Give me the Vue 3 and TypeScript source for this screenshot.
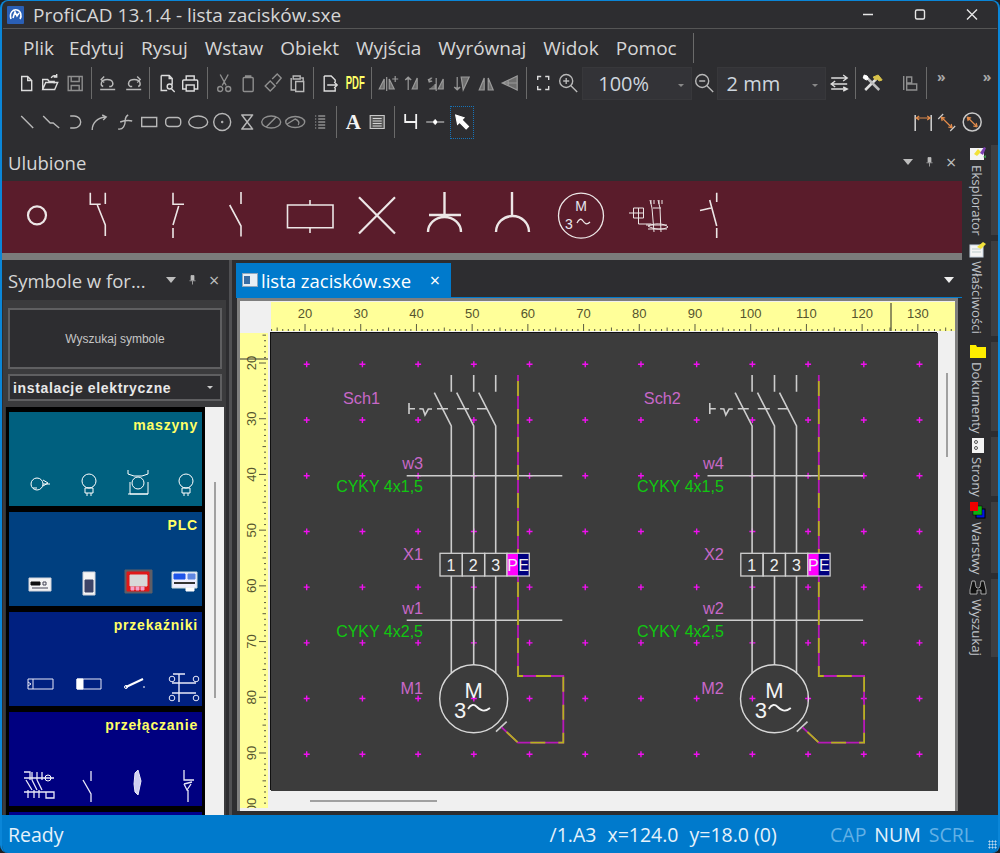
<script setup lang="ts">
type Part = { d: string; s?: string; f?: string; w?: number }
type Tool = { sep?: boolean; d?: string; tone?: string; parts?: Part[]; pdf?: boolean; big?: string; active?: boolean }

// kółko jako sciezka
const c = (x: number, y: number, r: number, ry = r) =>
  `M${x - r} ${y}a${r} ${ry} 0 1 0 ${2 * r} 0a${r} ${ry} 0 1 0 ${-2 * r} 0`

const menu = ['Plik', 'Edytuj', 'Rysuj', 'Wstaw', 'Obiekt', 'Wyjścia', 'Wyrównaj', 'Widok', 'Pomoc']

const row1a: Tool[] = [
  { d: 'M7.5 5.5h6l4 4v10h-10zM13.5 5.5v4h4' },
  { d: 'M4.5 18.5v-10h5l1.5 2h5v2M4.5 18.5l3-7h12l-3 7zM13 7c1-2 3-3 5-2M18.5 3v3h-3' },
  { d: 'M5 5.5h14v14H5zM8 5.5v5h8v-5M8 19.5v-5h8v5', tone: 'dim' },
  { sep: true },
  { d: 'M7 15.5c-3-1-3-7 4-7 6 0 7 5 4 7h-2M4 18.5h15M8 5.5l-3 3 3 3', tone: 'mid' },
  { d: 'M17 15.5c3-1 3-7-4-7-6 0-7 5-4 7h2M5 18.5h15M16 5.5l3 3-3 3', tone: 'mid' },
  { sep: true },
  { d: 'M7 4.5h8l3 3v6M7 4.5v15h6M15 4.5v3h3M13 15.5a2.5 2.5 0 1 0 5 0a2.5 2.5 0 1 0-5 0M17.5 18l3 3' },
  { d: 'M8 9V5h8v4M8 18H4.5v-8q0-1 1-1h13q1 0 1 1v8H16M8 14h8v6H8z' },
  { sep: true },
  { d: `M8 3.5l6 11M16 3.5l-6 11${c(8, 18, 2.5)}${c(16, 18, 2.5)}`, tone: 'dim' },
  { d: 'M8 6.5h8q1 0 1 1v12q0 1-1 1H8q-1 0-1-1v-12q0-1 1-1zM9.5 6.5V5h5v1.5', tone: 'dim' },
  { d: 'M4 15l5-5 5 5-5 5zM11 8l5-5 4 4-5 6', tone: 'dim' },
  { d: 'M8 5h7v3H8zM6 7v12h4M16 7h2v3M10.5 10.5h8v10h-8z', tone: 'mid' },
  { sep: true },
  { d: 'M6 5h7l4 4v2M6 5v15h11v-3M9 14h10M16 11l3 3-3 3' },
  { pdf: true },
  { sep: true },
  { d: 'M3 18l5-10v10zM13 8l5 10h-5zM10.5 6v14M19 5v6M16 8h6', tone: 'solid' },
  { d: 'M8 19V6M5 9l3-3 3 3M12 18l5-11v11z', tone: 'solid' },
  { d: 'M13 18l5-10v10zM11 7v13M4 18h6v-5M7 7a3 3 0 0 0-3 4M3 8l1 3 3-1', tone: 'solid' },
  { d: 'M8 6v13M5 16l3 3 3-3M12 6h8l-6 13z', tone: 'solid' },
  { d: 'M5 19l5-12v12zM14 7l5 12h-5z', tone: 'solid' },
  { d: 'M4 12l15-7v14zM4 12h15M10 9v6', tone: 'solid' },
  { sep: true },
  { d: 'M6.5 9V5.5H10M14 5.5h3.5V9M17.5 15v3.5H14M10 18.5H6.5V15' },
  { d: `${c(10, 10, 6.5)}M7 10h6M10 7v6M15 15l6 6`, tone: 'mid' },
]

const row2a: Tool[] = [
  { d: 'M6 6l12 12', tone: 'mid' },
  { d: 'M4 6l7 7h3l6 5', tone: 'mid' },
  { d: 'M6 6h4a6.5 6 0 1 1 0 12H6', tone: 'mid' },
  { d: 'M4 20c0-7 5-12 13-13M14 5l4 2-3 3', tone: 'mid' },
  { d: 'M5 19c5 1 7-4 7-8 0-3 1-5 3-6M7 12c3-1 8-2 12-1', tone: 'mid' },
  { d: 'M4.5 7.5h15v9h-15z', tone: 'mid' },
  { d: 'M8 7.5h8a3.5 3.5 0 0 1 3.5 3.5v2a3.5 3.5 0 0 1-3.5 3.5H8A3.5 3.5 0 0 1 4.5 13v-2A3.5 3.5 0 0 1 8 7.5z', tone: 'mid' },
  { d: c(12, 12, 9.5, 6), tone: 'mid' },
  { d: `${c(12, 12, 8.5)}${c(12, 12, 0.5)}`, tone: 'mid' },
  { d: 'M6 5h12M6 19h12M7 5.5l10 13M17 5.5L7 18.5', tone: 'mid' },
  { d: `${c(12, 12, 9.5, 6)}M7 17l10-10`, tone: 'dim' },
  { d: `${c(12, 12, 9.5, 5.5)}M4 14l8-5c3 1 5 4 3 6`, tone: 'dim' },
  { d: 'M7 6h1M7 9h1M7 12h1M7 15h1M7 18h1M10 6h7M10 9h7M10 12h7M10 15h7M10 18h7', tone: 'dim' },
  { sep: true },
  { big: 'A' },
  { parts: [{ d: 'M5 5.5h14v13H5z', f: '#555', s: '#c8c8c8' }, { d: 'M7.5 8.5h9M7.5 11h9M7.5 13.5h9M7.5 16h9', s: '#d4d4d4' }] },
  { sep: true },
  { d: 'M6 4v8h11M17 4v15', tone: 'bright' },
  { parts: [{ d: 'M3 12h18M12 9v6', s: '#d8d8d8' }, { d: c(12, 12, 1.5), f: '#fff', s: '#fff' }] },
  { active: true, parts: [{ d: 'M5 4l9 3-2.2 2.2 7 7-2.6 2.6-7-7L7 14z', f: '#fff', s: '#fff' }] },
]

const dims: Tool[] = [
  { parts: [{ d: 'M4 5v16M20 5v16', s: '#d4d4d4', w: 1.5 }, { d: 'M5 8h14M8 6l-3 2 3 2M16 6l3 2-3 2', s: '#e08a4a' }] },
  { parts: [{ d: 'M3 9l5-5M15 21l5-5', s: '#c8c8c8' }, { d: 'M6 7l11 11M6 7l1 4M6 7l4 1M17 18l-1-4M17 18l-4-1', s: '#e08a4a' }] },
  { parts: [{ d: c(12, 12, 9), s: '#c8c8c8', w: 1.5 }, { d: 'M7 7l10 10M7 7l1 4M7 7l4 1M17 17l-1-4M17 17l-4-1', s: '#e08a4a' }] },
]

const toolbarTools: Record<string, Tool> = {
  zoomOut: { d: `${c(10, 10, 6.5)}M7 10h6M15 15l6 6`, tone: 'mid' },
  swap: { d: 'M4 7h16M16 4l4 3-4 3M4 13h16M8 10l-4 3 4 3M4 18h16M16 16l4 2-4 2' },
  tools: {
    parts: [
      { d: 'M5 19L16 8', s: '#e0e0e0', w: 2.5 },
      { d: 'M13 6l5-2 4 5-3 1-2-2-2 1z', f: '#d8c24a', s: '#d8c24a' },
      { d: 'M6 6l13 13', s: '#bdbdbd', w: 2.5 },
      { d: 'M4 4l3 1 1 3-2 1-3-2z', f: '#fff', s: '#fff' },
    ],
  },
  align: { d: 'M5.5 5v14M8.5 6h5v6h-5zM8.5 13h10v6h-10z', tone: 'dim' },
}

const symbolCards: { title: string; bg: string; icons: Part[][] }[] = [
  {
    title: 'maszyny',
    bg: '#00607f',
    icons: [
      [{ d: `${c(19, 22, 6)}M25 18l5 3-5 3M25 22h7M15 26h4`, s: '#fff' }],
      [{ d: `${c(22, 19, 7)}M18 26h8v5h-8zM20 31v3M24 31v3`, s: '#fff' }],
      [{ d: `${c(22, 21, 6)}M12 8v4l6 2h8l6-2V8M14 20v12h18V20M12 32h20`, s: '#fff' }],
      [{ d: `${c(22, 19, 7)}M18 26h8v5h-8zM20 31v3M24 31v3`, s: '#fff' }],
    ],
  },
  {
    title: 'PLC',
    bg: '#004080',
    icons: [
      [{ d: 'M11 16h22v13H11z', f: '#f4f4f4', s: '#cfd2da' }, { d: 'M13 20h9v3h-9z', f: '#111', s: '#111' }, { d: 'M25 20h3v3h-3zM14 26h16', s: '#445' }],
      [{ d: 'M16 10h12v23H16z', f: '#f4f4f4', s: '#cfd2da' }, { d: 'M18 18h8v12h-8z', f: '#3d4468', s: '#3d4468' }],
      [{ d: 'M9 8h27v23H9z', f: '#5e5e66', s: '#5e5e66' }, { d: 'M11 10h22v19H11z', f: '#e01818', s: '#e01818' }, { d: 'M14 13h17v11H14z', f: '#d8d8d8', s: '#d8d8d8' }, { d: 'M15 25h3v3h-3zM20 25h3v3h-3zM25 25h3v3h-3z', f: '#f4a0c8', s: '#f4a0c8' }],
      [{ d: 'M8 10h25v16H8z', f: '#eef', s: '#cdd' }, { d: 'M10 12h11v5H10z', f: '#1f55e8', s: '#1f55e8' }, { d: 'M24 12h7v5h-7z', f: '#5f86e0', s: '#5f86e0' }, { d: 'M10 21h21', s: '#333', w: 2 }, { d: 'M22 26h8v3h-8z', f: '#fff', s: '#fff' }],
    ],
  },
  {
    title: 'przekaźniki',
    bg: '#002080',
    icons: [
      [{ d: 'M10 17h25v10H10zM15 17v10M10 20l3 2-3 2', s: '#e8e8f8' }],
      [{ d: 'M10 17h24v10H10z', s: '#e8e8f8' }, { d: 'M10 17h6v10h-6z', f: '#fff', s: '#fff' }],
      [{ d: 'M10 25l17-8', s: '#fff', w: 2 }, { d: `${c(10, 25, 1.5)}M28 24v2`, s: '#fff' }],
      [{ d: 'M9 12h12M15 12v28M8 21h24M8 31h24', s: '#e8e8f8', w: 1.4 }, { d: `${c(8, 17, 2.8)}${c(32, 17, 2.8)}${c(8, 36, 2.8)}${c(32, 36, 2.8)}`, s: '#e8e8f8' }],
    ],
  },
  {
    title: 'przełączanie',
    bg: '#000080',
    icons: [
      [{ d: 'M6 10h6v8M14 10v8M19 10v8M24 10v8M8 18l6 10M14 18l5 10M19 18l5 10M6 16h30M10 28v8M16 28v8M21 28v8M6 30h30v6h-8v-6', s: '#e8e8f8', w: 1.3 }, { d: c(30, 16, 3), s: '#fff' }],
      [{ d: 'M24 9v10M16 18l8 14v8', s: '#e8e8f8', w: 1.3 }],
      [{ d: 'M19 11l3-3 3 11-3 14-3-3-1-8z', f: '#d0d0f0', s: '#e8e8f8' }],
      [{ d: 'M20 8v10h10M20 22l8-2M20 22l3 6 4-6M24 28v12', s: '#e8e8f8', w: 1.3 }],
    ],
  },
  { title: '', bg: '#00008b', icons: [] },
]

const sideTabs = [
  { name: 'Eksplorator', icon: 'brush', h: 90 },
  { name: 'Właściwości', icon: 'props', h: 95 },
  { name: 'Dokumenty', icon: 'folder', h: 89 },
  { name: 'Strony', icon: 'pages', h: 59 },
  { name: 'Warstwy', icon: 'layers', h: 71 },
  { name: 'Wyszukaj', icon: 'find', h: 78 },
]

// lineal: 10 mm = 55.71 px
const U = 5.571
const topX = (mm: number) => 193.6 + U * mm
const leftY = (mm: number) => 251.6 + U * mm
const range = (a: number, b: number) => Array.from({ length: b - a + 1 }, (_, i) => a + i)
const tickLen = (mm: number) => (mm % 10 === 0 ? 7 : mm % 5 === 0 ? 3.5 : 2)

const gridX = range(0, 11).map((i) => 306.7 + i * 55.71)
const gridY = range(0, 7).map((i) => 364.3 + i * 55.71)
const gridDots = gridX.flatMap((x) => gridY.map((y) => `M${x - 3} ${y}h6M${x} ${y - 3}v6`)).join('')

const schematics = [
  { dx: 0, sch: 'Sch1', top: 'w3', bot: 'w1', term: 'X1', mot: 'M1' },
  { dx: 300.8, sch: 'Sch2', top: 'w4', bot: 'w2', term: 'X2', mot: 'M2' },
]
const phases = [451.3, 473.7, 495.7]
const peLines = 'M518 375V553M518 576V676H563.3V742.7H518L501.7 727.3'
const cells = [
  { x: 440, label: '1' },
  { x: 462.3, label: '2' },
  { x: 484.7, label: '3' },
]
</script>

<template>
  <div class="window">
    <!-- titulek -->
    <div class="titlebar">
      <svg class="app-icon" viewBox="0 0 17 18">
        <rect width="17" height="18" rx="1" fill="#2a5fb5" />
        <path d="M4 13c-2-6 2-10 6-9 4 1 5 6 3 9M6 12l2-6 2 4 2-3" fill="none" stroke="#fff" stroke-width="1.6" />
      </svg>
      <span class="title-text">ProfiCAD 13.1.4 - lista zacisków.sxe</span>
      <div class="win-buttons">
        <svg viewBox="0 0 52 27"><path d="M21 13.5h10" stroke="#e6e6e6" stroke-width="1.4" /></svg>
        <svg viewBox="0 0 52 27"><rect x="21.5" y="9" width="9" height="9" rx="1.5" fill="none" stroke="#e6e6e6" stroke-width="1.4" /></svg>
        <svg viewBox="0 0 52 27"><path d="M21 8.5l10 10M31 8.5l-10 10" stroke="#e6e6e6" stroke-width="1.4" /></svg>
      </div>
    </div>

    <div class="bars">
      <div class="row menu-row">
        <i class="grip" />
        <div class="menu">
          <span v-for="m in menu" :key="m" class="menu-item">{{ m }}</span>
        </div>
        <i class="menu-end" />
      </div>

      <div class="row tool-row">
        <i class="grip" />
        <div class="row-start">
          <template v-for="(t, i) in row1a" :key="i">
            <i v-if="t.sep" class="sep" />
            <span v-else-if="t.pdf" class="tool pdf">PDF</span>
            <svg v-else class="tool" viewBox="0 0 24 24">
              <path :class="['ico', t.tone]" :d="t.d" />
            </svg>
          </template>
        </div>
        <div class="combo first"><span>100%</span><b class="caret" /></div>
        <svg class="tool" viewBox="0 0 24 24"><path class="ico mid" :d="toolbarTools.zoomOut.d" /></svg>
        <div class="combo second"><span>2 mm</span><b class="caret" /></div>
        <svg class="tool swap" viewBox="0 0 24 24"><path class="ico" :d="toolbarTools.swap.d" /></svg>
        <i class="sep" />
        <svg class="tool" viewBox="0 0 24 24">
          <path v-for="(p, i) in toolbarTools.tools.parts" :key="i" :d="p.d" :fill="p.f ?? 'none'" :stroke="p.s" :stroke-width="p.w ?? 1" />
        </svg>
        <i class="grip grip-mid" />
        <svg class="tool" viewBox="0 0 24 24"><path class="ico dim" :d="toolbarTools.align.d" /></svg>
        <i class="sep" />
        <span class="more">»</span>
        <i class="grip grip-mid" />
        <span class="more last">»</span>
      </div>

      <div class="row tool-row second-row">
        <i class="grip" />
        <div class="row-start">
          <template v-for="(t, i) in row2a" :key="i">
            <i v-if="t.sep" class="sep" />
            <span v-else-if="t.big" class="tool big-a">{{ t.big }}</span>
            <svg v-else :class="['tool', { active: t.active }]" viewBox="0 0 24 24">
              <path v-if="t.d" :class="['ico', t.tone]" :d="t.d" />
              <path v-for="(p, j) in t.parts" :key="j" :d="p.d" :fill="p.f ?? 'none'" :stroke="p.s" :stroke-width="p.w ?? 1.2" />
            </svg>
          </template>
        </div>
        <div class="row-end">
          <i class="grip" />
          <svg v-for="(t, i) in dims" :key="i" class="tool" viewBox="0 0 24 24">
            <path v-for="(p, j) in t.parts" :key="j" :d="p.d" fill="none" :stroke="p.s" :stroke-width="p.w ?? 1.2" />
          </svg>
        </div>
      </div>
    </div>

    <div class="main">
      <div class="workspace">
        <!-- ulubione -->
        <div class="fav-head">
          <span class="fav-title">Ulubione</span>
          <i class="fav-dots" />
          <div class="pane-btns">
            <b class="tri" />
            <svg viewBox="0 0 12 14"><path d="M4 1h4v6H4zM2 8h8M6 8v5" fill="#bbb" stroke="#bbb" /></svg>
            <span class="x">×</span>
          </div>
        </div>
        <svg class="fav-strip" viewBox="2 181 960 72">
          <g fill="none" stroke="#ece6e6" stroke-width="1.6">
            <circle cx="37" cy="215.3" r="9" stroke-width="2.2" />
            <path d="M90.3 192.7V204.3H100.7M105.3 192.7V204M97.3 205L105.3 225V236" />
            <path d="M173 192.7V204.3H184M178.7 206L173 225M173 228V238" />
            <path d="M241 192V204M229.7 205L241 226V236.5" />
            <path d="M287.5 205H333V227.7H287.5zM310 200V205M310 227.7V233" />
            <path d="M359 197.3L395 233.5M395 197.3L359 233.5" stroke-width="2.2" />
            <path d="M444.5 192V215M429 215H461" stroke-width="2.4" />
            <path d="M428 232A16.5 15 0 0 1 461 232" stroke-width="2.4" />
            <path d="M512 192V215" stroke-width="2.4" />
            <path d="M496 232A16.5 16 0 0 1 529 232" stroke-width="2.4" />
            <circle cx="581" cy="215.7" r="22.5" stroke-width="1.3" />
            <path d="M577 223c2-4 4-5 6-2s4 4 7 1" stroke-width="1.3" />
            <path d="M633.5 208h10v10h-10zM638.5 208v10M633.5 213h10M629 213h4M638.5 218v6h13M650 200l2 8 2 24M658 200l2 8 1 24M653 208h8M646 225h21M648 229h19M648 226c6-3 16-3 20 1-4 3-14 3-20-1zM651 200v4M654 200v4M659 200v4M662 200v4" stroke-width="1" />
            <path d="M716.7 192.7V202M709.7 200L716.7 226M716.7 228V238M700 210.5L711 208" />
          </g>
          <g class="fav-text">
            <text x="581" y="211" text-anchor="middle">M</text>
            <text x="569" y="229" text-anchor="middle">3</text>
          </g>
        </svg>
        <i class="fav-rule" />

        <div class="docking">
          <!-- panel symboli -->
          <aside class="symbols">
            <div class="pane-head">
              <span>Symbole w for...</span>
              <div class="pane-btns">
                <b class="tri" />
                <svg viewBox="0 0 12 14"><path d="M4 1h4v6H4zM2 8h8M6 8v5" fill="#bbb" stroke="#bbb" /></svg>
                <span class="x">×</span>
              </div>
            </div>
            <div class="pane-body">
              <div class="search-btn">Wyszukaj symbole</div>
              <div class="cat-select"><span>instalacje elektryczne</span><b class="tri small" /></div>
              <div class="list-wrap">
                <div class="cards">
                  <div v-for="card in symbolCards" :key="card.bg" class="card" :style="{ background: card.bg }">
                    <div class="card-title">{{ card.title }}</div>
                    <div class="card-icons">
                      <svg v-for="(icon, i) in card.icons" :key="i" viewBox="0 0 44 44">
                        <path v-for="(p, j) in icon" :key="j" :d="p.d" :fill="p.f ?? 'none'" :stroke="p.s" :stroke-width="p.w ?? 1" />
                      </svg>
                    </div>
                  </div>
                </div>
                <div class="list-scroll"><i /></div>
              </div>
            </div>
          </aside>
          <i class="splitter" />

          <!-- dokument -->
          <section class="doc">
            <div class="tabs">
              <div class="tab">
                <svg viewBox="0 0 16 14">
                  <rect x=".5" y=".5" width="15" height="13" fill="#e8eef4" stroke="#8ea6bd" />
                  <rect x="2" y="3" width="6" height="8" fill="#3a6ea5" />
                </svg>
                <span>lista zacisków.sxe</span>
                <span class="tab-x">×</span>
              </div>
              <b class="tri tab-tri" />
            </div>
            <div class="frame">
              <div class="corner" />
              <svg class="ruler-top" viewBox="271 302 684 29">
                <g class="ticks">
                  <path v-for="mm in range(14, 136)" :key="mm" :d="`M${topX(mm)} 331v${-tickLen(mm)}`" />
                </g>
                <text v-for="mm in range(2, 13)" :key="mm" class="ruler-num" :x="topX(mm * 10)" y="318" text-anchor="middle">{{ mm * 10 }}</text>
                <path d="M891 303V331" stroke="#222" />
              </svg>
              <svg class="ruler-left" viewBox="240 333 28 475">
                <g class="ticks">
                  <path v-for="mm in range(15, 100)" :key="mm" :d="`M266 ${leftY(mm)}h${-tickLen(mm)}`" />
                </g>
                <text
                  v-for="mm in range(2, 10)"
                  :key="mm"
                  class="ruler-num"
                  :transform="`rotate(-90 256 ${leftY(mm * 10)})`"
                  x="256"
                  :y="leftY(mm * 10)"
                  text-anchor="middle"
                >{{ mm * 10 }}</text>
                <path d="M240 359H268" stroke="#333" />
              </svg>
              <div class="canvas-wrap">
                <svg class="canvas" viewBox="271 333 667 458">
                  <path class="grid-dots" :d="gridDots" />
                  <g v-for="s in schematics" :key="s.sch" :transform="`translate(${s.dx} 0)`">
                    <g class="wire">
                      <path v-for="x in phases" :key="x" :d="`M${x} 375V391.7M${x - 17} 392.7L${x} 426V553M${x} 576V${x === 473.7 ? 665 : 673}`" />
                      <path d="M409 403V414M409 408.7H415M419.3 408.7L423 409L425 415L428.3 409H432M437 408.7H448M457 408.7H469M477 408.7H487" />
                      <path d="M406.7 475.7H562.3M406.7 620.3H562.3" />
                      <path d="M496 731.7L506.7 721.7" />
                    </g>
                    <path class="pe-base" :d="peLines" />
                    <path class="pe-dash" :d="peLines" />
                    <text class="lbl pink" x="343" y="403.5">{{ s.sch }}</text>
                    <text class="lbl pink" x="423" y="468.5" text-anchor="end">{{ s.top }}</text>
                    <text class="lbl green" x="423" y="491.5" text-anchor="end">CYKY 4x1,5</text>
                    <text class="lbl pink" x="423" y="559.5" text-anchor="end">{{ s.term }}</text>
                    <text class="lbl pink" x="423" y="613.5" text-anchor="end">{{ s.bot }}</text>
                    <text class="lbl green" x="423" y="636.5" text-anchor="end">CYKY 4x2,5</text>
                    <text class="lbl pink" x="423" y="693.5" text-anchor="end">{{ s.mot }}</text>
                    <g v-for="cell in cells" :key="cell.x">
                      <rect class="cell" :x="cell.x" y="553.3" width="22.3" height="22.7" />
                      <text class="cell-num" :x="cell.x + 11" y="570.5" text-anchor="middle">{{ cell.label }}</text>
                    </g>
                    <rect x="507" y="553.3" width="11" height="22.7" fill="#ff00ff" />
                    <rect x="518" y="553.3" width="11.3" height="22.7" fill="#000080" />
                    <rect class="cell" x="507" y="553.3" width="22.3" height="22.7" />
                    <text class="cell-num" x="512.5" y="570.5" text-anchor="middle">P</text>
                    <text class="cell-num" x="523.5" y="570.5" text-anchor="middle">E</text>
                    <circle class="motor" cx="473.7" cy="698.7" r="34" />
                    <text class="motor-txt" x="473.7" y="698" text-anchor="middle">M</text>
                    <text class="motor-txt" x="460" y="718" text-anchor="middle">3</text>
                    <path class="tilde" d="M468 709c3-5 6-5 9-2s7 6 13 1" />
                  </g>
                </svg>
                <div class="vscroll"><i /></div>
                <div class="hscroll"><i /></div>
                <div class="scroll-corner" />
              </div>
            </div>
          </section>
        </div>
      </div>

      <!-- boczne zakladki -->
      <nav class="sidebar">
        <div v-for="tab in sideTabs" :key="tab.name" class="side-tab" :style="{ height: tab.h + 'px' }">
          <div class="side-inner">
            <svg class="side-icon" viewBox="0 0 18 17">
              <template v-if="tab.icon === 'brush'">
                <rect x="1" y="3" width="14" height="12" fill="#f4f4f4" />
                <path d="M5 9l4-5 3 3-4 4z" fill="#f2e23a" />
                <path d="M11 8l4-6 2 1-3 7z" fill="#7a3fb0" />
                <path d="M14 12l3-2v3z" fill="#3aa04a" />
              </template>
              <template v-else-if="tab.icon === 'props'">
                <rect x="1" y="4" width="13" height="12" fill="#f4f4f4" stroke="#c9d6e2" />
                <path d="M3 8h9M3 11h9" stroke="#bcc" />
                <path d="M8 6l6-5 3 2-5 5z" fill="#f2e23a" />
              </template>
              <path v-else-if="tab.icon === 'folder'" d="M1 3h6l1 2h9v11H1z" fill="#ffee00" />
              <template v-else-if="tab.icon === 'pages'">
                <rect x="3" y="1" width="12" height="15" fill="#f4f4f4" />
                <circle cx="7" cy="5" r="1.5" fill="none" stroke="#555" />
                <circle cx="7" cy="11" r="1.5" fill="none" stroke="#555" />
              </template>
              <template v-else-if="tab.icon === 'layers'">
                <rect x="7" y="7" width="9" height="9" fill="#0018e0" stroke="#000" />
                <rect x="4" y="4" width="9" height="9" fill="#10b010" stroke="#000" stroke-width=".5" />
                <rect x="1" y="0" width="8" height="9" fill="#f00000" />
              </template>
              <template v-else>
                <path d="M3 2h3l1 6 1 1h2l1-1 1-6h3l2 9v4h-5v-4H8v4H1v-4z" fill="#111" stroke="#ddd" stroke-width=".7" />
              </template>
            </svg>
            <span class="side-label">{{ tab.name }}</span>
          </div>
          <i class="side-bar" />
        </div>
      </nav>
    </div>

    <footer class="status">
      <span class="st-ready">Ready</span>
      <span class="st-sheet">/1.A3</span>
      <span class="st-x">x=124.0</span>
      <span class="st-y">y=18.0 (0)</span>
      <span class="st-cap off">CAP</span>
      <span class="st-num">NUM</span>
      <span class="st-scrl off">SCRL</span>
      <i class="st-grip" />
    </footer>
  </div>
</template>

<style>
html,
body {
  margin: 0;
  background: #202022;
}
</style>

<style scoped>
.window {
  width: 1000px;
  height: 853px;
  box-sizing: border-box;
  display: flex;
  flex-direction: column;
  background: #2d2d30;
  border: solid #0a86d8;
  border-width: 1px 2px 0 2px;
  border-radius: 8px;
  overflow: hidden;
  color: #d6d6d6;
  font-family: "Open Sans", "Noto Sans", sans-serif;
}

.titlebar {
  height: 27px;
  flex: none;
  display: flex;
  align-items: center;
  padding-left: 4px;
  border-bottom: 1px solid #555;
  margin: 0 1px 0 1px;
}

.app-icon {
  width: 17px;
  height: 18px;
}

.title-text {
  margin-left: 9px;
  font-size: 19px;
}

.win-buttons {
  margin-left: auto;
  display: flex;
  margin-right: -1px;
}

.win-buttons svg {
  width: 52px;
  height: 27px;
}

.bars {
  flex: none;
  height: 116px;
}

.row {
  display: flex;
  align-items: center;
}

.grip {
  display: block;
  flex: none;
  width: 5px;
  align-self: stretch;
  margin-left: 5px;
  background-image: radial-gradient(circle, #4e4e52 45%, transparent 50%);
  background-size: 2px 2px;
}

.menu-row {
  height: 36px;
  padding-top: 1px;
  box-sizing: border-box;
}

.menu {
  display: flex;
  margin-left: 2.5px;
}

.menu-item {
  padding: 0 8.5px;
  font-size: 19px;
  white-space: nowrap;
}

.menu-item:first-child {
  padding-right: 6.5px;
}

.menu-end {
  display: block;
  width: 1px;
  height: 30px;
  background: #6a6a6a;
  margin-left: 8px;
}

.tool-row {
  height: 36px;
}

.second-row {
  height: 38px;
  margin-top: 2px;
}

.row-start {
  display: flex;
  align-items: center;
  margin-left: 2px;
}

.second-row .row-start {
  margin-left: 3px;
}

.row-end {
  display: flex;
  margin-left: auto;
  margin-right: 14px;
  align-self: stretch;
  align-items: center;
}

.row-end .grip {
  margin-right: 3px;
}

.tool {
  flex: none;
  width: 24.4px;
  height: 24px;
  box-sizing: border-box;
}

.ico {
  fill: none;
  stroke: #dcdcdc;
  stroke-width: 1.4;
}

.ico.mid {
  stroke: #b8b8b8;
}

.ico.dim {
  stroke: #8e8e8e;
}

.ico.solid {
  stroke: #9a9a9a;
  fill: #6e6e6e;
  stroke-width: 1.2;
}

.ico.bright {
  stroke: #f2f2f2;
  stroke-width: 1.8;
}

.sep {
  display: block;
  flex: none;
  width: 1px;
  height: 32px;
  margin: 0 4px;
  background: #6a6a6a;
}

.pdf {
  display: flex;
  align-items: center;
  justify-content: center;
  font: bold 19px "Liberation Sans", sans-serif;
  color: #ffff66;
  transform: scaleX(.5);
}

.big-a {
  display: flex;
  align-items: center;
  justify-content: center;
  font: bold 21px "Liberation Serif", serif;
  color: #f4f4f4;
}

.active {
  width: 24.4px;
  height: 33px;
  margin-left: 2px;
  padding: 4px 0;
  border: 1px dotted #1673b8;
}

.combo {
  flex: none;
  display: flex;
  align-items: center;
  height: 33px;
  box-sizing: border-box;
  background: #333337;
  border: 1px solid #38383b;
  font-size: 20px;
  color: #ced6de;
  position: relative;
}

.combo.first {
  width: 110px;
  margin-left: 2px;
  padding-left: 15px;
}

.combo.second {
  width: 109px;
  padding-left: 9px;
}

.caret {
  position: absolute;
  right: 7px;
  top: 16px;
  border: 3px solid transparent;
  border-top-color: #888;
}

.swap {
  margin-left: 1.5px;
}

.grip-mid {
  margin: 0 3px 0 5px;
}

.more {
  flex: none;
  width: 16px;
  height: 28px;
  margin-left: 2px;
  text-align: center;
  font-size: 14px;
  font-weight: 700;
  line-height: 16px;
  color: #a8a8a8;
}

.more.last {
  margin-left: auto;
  margin-right: 3px;
}

.main {
  flex: 1;
  min-height: 0;
  display: flex;
}

.workspace {
  width: 960px;
  flex: none;
  display: flex;
  flex-direction: column;
}

.fav-head {
  height: 36px;
  flex: none;
  display: flex;
  align-items: center;
  padding: 0 6px 2px;
  box-sizing: border-box;
}

.fav-title {
  font-size: 18.5px;
}

.fav-dots {
  flex: 1;
  height: 7px;
  margin: 0 8px 0 14px;
  background-image: radial-gradient(circle, #4e4e52 45%, transparent 50%);
  background-size: 2px 2px;
}

.pane-btns {
  display: flex;
  align-items: center;
  gap: 12px;
}

.pane-btns svg {
  width: 9px;
  height: 12px;
}

.tri {
  display: block;
  border: 5px solid transparent;
  border-top: 6px solid #bdbdbd;
  border-bottom: 0;
}

.tri.small {
  border-width: 3px;
  border-top: 3.5px solid #ccc;
  border-bottom: 0;
}

.x {
  font-size: 18px;
  line-height: 18px;
  color: #bdbdbd;
  width: 10px;
  text-align: center;
}

.fav-strip {
  flex: none;
  width: 960px;
  height: 72px;
  background: #5a1c2b;
}

.fav-text text {
  font-family: "Liberation Sans", sans-serif;
  font-size: 14px;
  fill: #e6e6f0;
}

.fav-rule {
  display: block;
  flex: none;
  height: 7px;
  background: #7b7b7b;
}

.docking {
  flex: 1;
  min-height: 0;
  display: flex;
}

.symbols {
  width: 223px;
  flex: none;
  display: flex;
  flex-direction: column;
  margin-left: 1px;
  padding-top: 2px;
}

.pane-head {
  height: 38px;
  flex: none;
  display: flex;
  align-items: center;
  justify-content: space-between;
  padding: 0 7px 2px 5px;
  font-size: 18.5px;
  box-sizing: border-box;
  white-space: nowrap;
}

.pane-body {
  flex: 1;
  min-height: 0;
  background: #3b3b3d;
  padding: 8px 4px 0 5px;
  display: flex;
  flex-direction: column;
}

.search-btn {
  height: 61px;
  flex: none;
  box-sizing: border-box;
  display: flex;
  align-items: center;
  justify-content: center;
  background: #2d2d30;
  border: 2px solid #5f5f61;
  font: 12px "Liberation Sans", sans-serif;
  color: #c6c6c6;
}

.cat-select {
  height: 27px;
  flex: none;
  margin-top: 5px;
  box-sizing: border-box;
  display: flex;
  align-items: center;
  justify-content: space-between;
  background: #2d2d30;
  border: 2px solid #5f5f61;
  padding: 0 7px 0 3px;
  font: bold 14px "Liberation Sans", sans-serif;
  letter-spacing: .65px;
  color: #e8e8e8;
}

.list-wrap {
  flex: 1;
  min-height: 0;
  margin: 6px -2px 0 -3px;
  display: flex;
  overflow: hidden;
}

.cards {
  width: 200px;
  flex: none;
  box-sizing: border-box;
  padding: 5px 3px 0 3px;
  display: flex;
  flex-direction: column;
  gap: 6px;
  background: #000;
  border-left: 1px solid #333;
  overflow: hidden;
}

.card {
  flex: none;
  height: 94px;
  position: relative;
}

.card-title {
  padding: 5px 4px 0 0;
  text-align: right;
  font: bold 14px "Liberation Sans", sans-serif;
  letter-spacing: .8px;
  color: #ffff66;
}

.card-icons {
  position: absolute;
  left: 7px;
  bottom: 0;
  display: grid;
  grid-template-columns: repeat(4, 48.7px);
  justify-items: center;
}

.card-icons svg {
  width: 44px;
  height: 44px;
}

.list-scroll {
  width: 19px;
  flex: none;
  background: #f0f0f0;
  position: relative;
}

.list-scroll i {
  position: absolute;
  left: 9px;
  top: 75px;
  width: 2px;
  height: 216px;
  background: #a0a0a0;
}

.splitter {
  display: block;
  flex: none;
  width: 10px;
  box-sizing: border-box;
  border-left: 3px solid #2d2d30;
  border-right: 4px solid #2d2d30;
  background: #505053;
}

.doc {
  flex: 1;
  min-width: 0;
  display: flex;
  flex-direction: column;
}

.tabs {
  height: 38px;
  flex: none;
  display: flex;
  align-items: flex-end;
  box-sizing: border-box;
  border-bottom: 1px solid #007acc;
  position: relative;
}

.tab {
  width: 215px;
  height: 34px;
  box-sizing: border-box;
  display: flex;
  align-items: center;
  background: #007acc;
  color: #fff;
  font-size: 18.5px;
  padding-left: 6px;
}

.tab svg {
  width: 16px;
  height: 14px;
  margin-right: 3px;
}

.tab-x {
  margin-left: auto;
  margin-right: 11px;
  font-size: 18px;
}

.tab-tri {
  position: absolute;
  right: 8px;
  top: 17px;
  border-top-color: #eee;
}

.frame {
  width: 721px;
  height: 513px;
  flex: none;
  margin-left: 1px;
  box-sizing: border-box;
  background: #f0f0f0;
  border: solid #7e7e7e;
  border-width: 3px 3px 0 3px;
  display: grid;
  grid-template-columns: 31px 684px;
  grid-template-rows: 32px 478px;
}

.corner {
  background: #f0f0f0;
}

.ruler-top {
  width: 684px;
  height: 29px;
  margin-top: 1px;
  background: #ffff99;
}

.ruler-left {
  width: 28px;
  height: 475px;
  background: #ffff99;
}

.ticks path {
  stroke: #5a5a40;
  stroke-width: 1;
}

.ruler-num {
  font: 13px "Liberation Sans", sans-serif;
  fill: #55552e;
}

.canvas-wrap {
  display: grid;
  grid-template-columns: 667px 17px;
  grid-template-rows: 458px 20px;
}

.canvas {
  width: 667px;
  height: 458px;
  background: #3c3c3c;
  box-shadow: -1px -1px #111;
}

.grid-dots {
  fill: none;
  stroke: #f010f0;
  stroke-width: 1.4;
}

.wire path,
.wire {
  fill: none;
  stroke: #cdcdcd;
  stroke-width: 1.6;
}

.pe-base {
  fill: none;
  stroke: #b818b8;
  stroke-width: 1.8;
}

.pe-dash {
  fill: none;
  stroke: #b4b41c;
  stroke-width: 1.8;
  stroke-dasharray: 15 13;
  stroke-dashoffset: -6;
}

.lbl {
  font: 16.3px "Liberation Sans", sans-serif;
}

.lbl.green {
  font-size: 16px;
}

.pink {
  fill: #c868c8;
}

.green {
  fill: #10c810;
}

.cell {
  fill: none;
  stroke: #d0d0d0;
  stroke-width: 1.3;
}

.cell-num {
  font: 16px "Liberation Sans", sans-serif;
  fill: #f0f0f0;
}

.motor {
  fill: none;
  stroke: #d8d8d8;
  stroke-width: 1.4;
}

.motor-txt {
  font: 22px "Liberation Sans", sans-serif;
  fill: #f4f4f4;
}

.tilde {
  fill: none;
  stroke: #f4f4f4;
  stroke-width: 1.8;
}

.vscroll,
.hscroll {
  background: #f0f0f0;
  position: relative;
}

.vscroll i {
  position: absolute;
  left: 8px;
  top: 40px;
  width: 2px;
  height: 84px;
  background: #a0a0a0;
}

.hscroll i {
  position: absolute;
  left: 39px;
  top: 9px;
  width: 127px;
  height: 2px;
  background: #a0a0a0;
}

.scroll-corner {
  background: #f0f0f0;
}

.sidebar {
  flex: 1;
  display: flex;
  flex-direction: column;
  gap: 6px;
}

.side-tab {
  display: flex;
  justify-content: flex-end;
}

.side-inner {
  flex: 1;
  display: flex;
  flex-direction: column;
  align-items: center;
  padding-left: 3px;
}

.side-icon {
  width: 18px;
  height: 17px;
  flex: none;
}

.side-label {
  writing-mode: vertical-rl;
  margin-top: 3px;
  margin-right: 2px;
  font-size: 13.2px;
  color: #c0c4ca;
  white-space: nowrap;
}

.side-bar {
  display: block;
  width: 7px;
  background: #3e3e40;
}

.status {
  flex: none;
  height: 38px;
  display: flex;
  align-items: center;
  margin: 0 -2px;
  background: #007acc;
  color: #e6f2fb;
  font-size: 19.5px;
  position: relative;
  white-space: nowrap;
}

.st-ready {
  margin-left: 8px;
}

.st-sheet {
  margin-left: 486px;
}

.st-x {
  margin-left: 11px;
}

.st-y {
  margin-left: 11px;
}

.st-cap {
  margin-left: auto;
}

.st-num {
  margin-left: 8px;
}

.st-scrl {
  margin: 0 26px 0 8px;
}

.off {
  color: #63b1e6;
}

.st-grip {
  position: absolute;
  right: 3px;
  bottom: 4px;
  width: 9px;
  height: 9px;
  background-image: radial-gradient(circle, #bcd8ee 45%, transparent 50%);
  background-size: 3px 3px;
}
</style>
